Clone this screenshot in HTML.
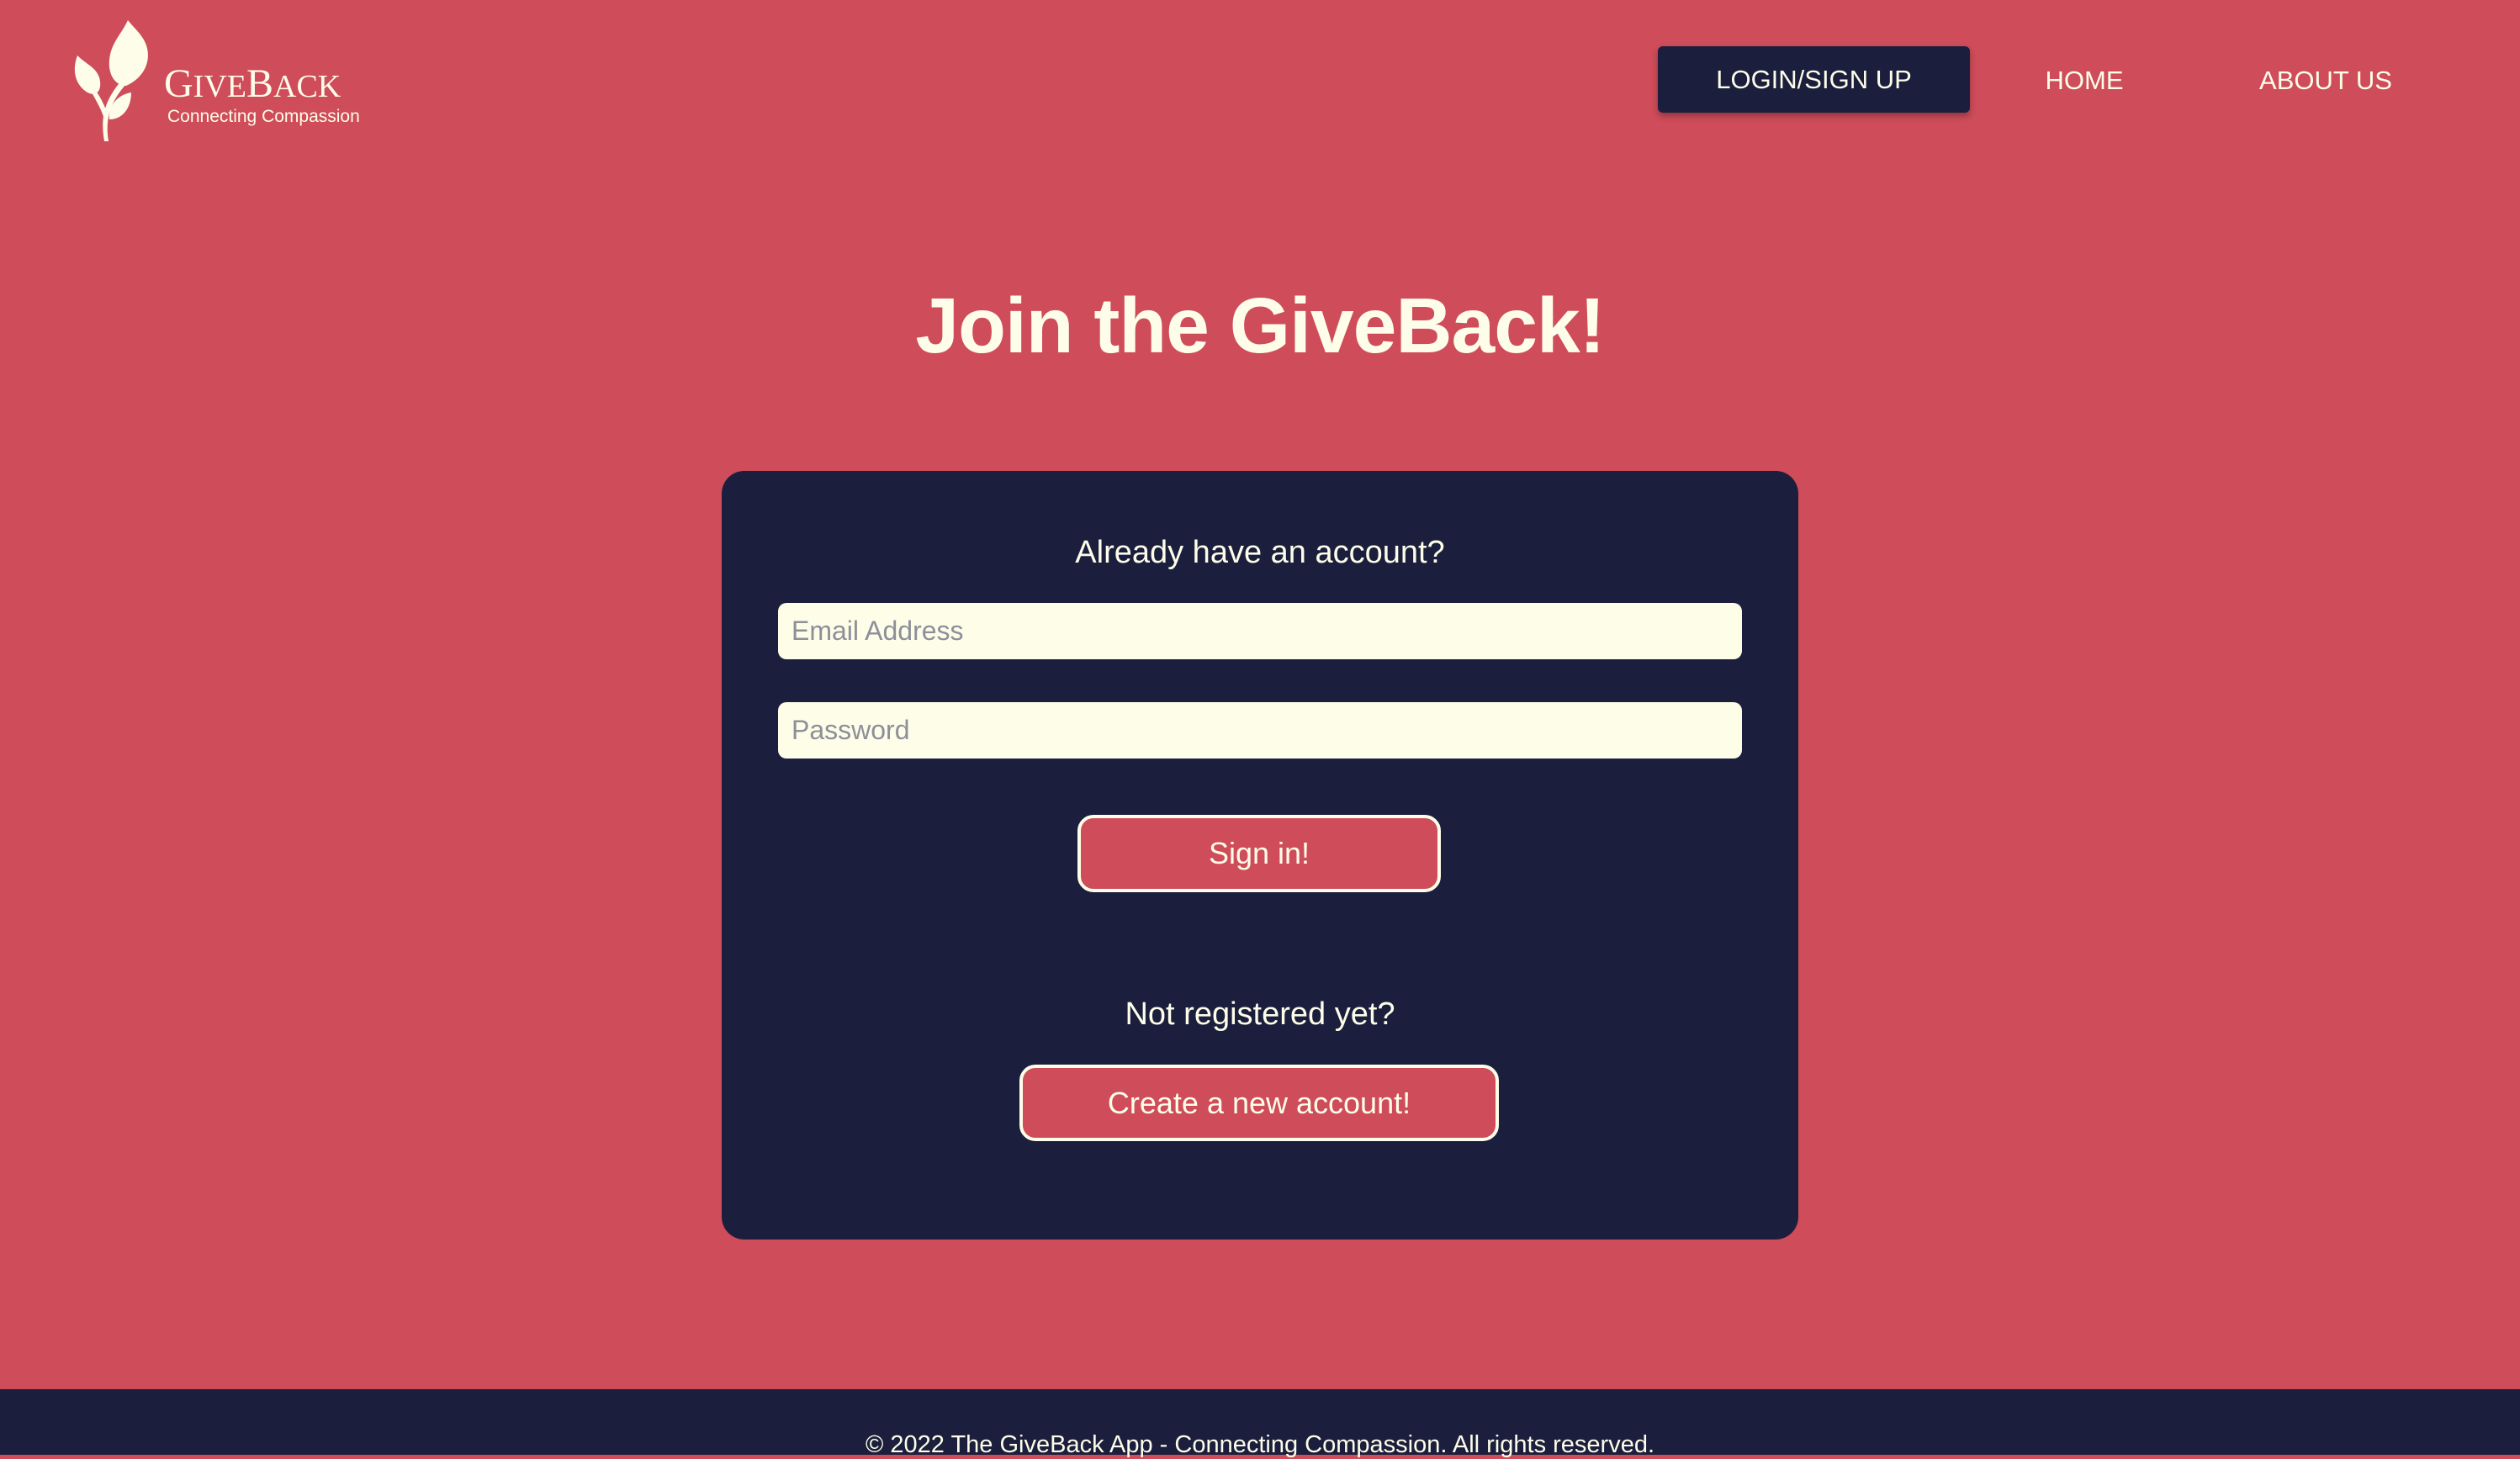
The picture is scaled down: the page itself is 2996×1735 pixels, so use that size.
<!DOCTYPE html>
<html><head><meta charset="utf-8"><style>
*{margin:0;padding:0;box-sizing:border-box}
html,body{width:2996px;height:1730px;overflow:hidden;background:#cf4c5a;font-family:"Liberation Sans",sans-serif;color:#fdfde9}
.abs{position:absolute}
.nav{font-size:31px;color:#fdfde9}
.btnnav{left:1971px;top:55px;width:371px;height:79px;background:#1b1f3d;border-radius:6px;box-shadow:0 4px 8px rgba(0,0,0,.3);display:flex;align-items:center;justify-content:center}
h1{position:absolute;left:0;width:2996px;text-align:center;top:334px;font-size:93px;font-weight:bold;letter-spacing:-1px}
.card{left:858px;top:560px;width:1280px;height:914px;background:#1b1f3d;border-radius:27px}
.t{position:absolute;left:0;width:100%;text-align:center;font-size:38px}
.inp{position:absolute;left:67px;width:1146px;height:67px;background:#fdfde8;border-radius:10px;color:#8d8f99;font-size:32px;padding-left:16px;line-height:67px}
.b{position:absolute;border:4px solid #fdfde9;background:#cf4c5a;border-radius:19px;display:flex;align-items:center;justify-content:center;font-size:36px}
.foot{left:0;top:1652px;width:2996px;height:78px;background:#1b1f3d}
</style></head><body>
<svg class="abs" style="left:86px;top:22px" width="100" height="146" viewBox="0 0 100 146">
<g fill="#fdfde9">
<path d="M66 2 C58 20 42 32 44 58 C46 74 56 80 64 80 C86 70 94 50 88 32 C84 20 74 12 66 2Z"/>
<path d="M6 44 C0 60 2 78 18 88 C30 94 36 84 32 70 C28 58 16 54 6 44Z"/>
<path d="M70 88 C56 90 42 102 44 120 C60 120 70 106 70 88Z"/>
<path d="M58 74 C42 94 32 112 38 146 L43 146 C38 116 48 96 64 78Z" />
<path d="M20 82 C28 98 34 106 38 120 L43 118 C39 104 33 92 25 82Z"/>
</g></svg>
<div class="abs" style="left:195px;top:76px;font-family:'Liberation Serif',serif;font-size:38px;letter-spacing:0;line-height:1"><span style="font-size:48px">G</span>IVE<span style="font-size:48px">B</span>ACK</div>
<div class="abs" style="left:199px;top:127px;font-size:21px">Connecting Compassion</div>
<div class="abs nav btnnav">LOGIN/SIGN UP</div>
<div class="abs nav" style="left:2378px;width:200px;text-align:center;top:78px">HOME</div>
<div class="abs nav" style="left:2615px;width:300px;text-align:center;top:78px">ABOUT US</div>
<h1>Join the GiveBack!</h1>
<div class="abs card">
<div class="t" style="top:76px">Already have an account?</div>
<div class="inp" style="top:157px">Email Address</div>
<div class="inp" style="top:275px">Password</div>
<div class="b" style="left:423px;top:409px;width:432px;height:92px">Sign in!</div>
<div class="t" style="top:625px">Not registered yet?</div>
<div class="b" style="left:354px;top:706px;width:570px;height:91px">Create a new account!</div>
</div>
<div class="abs foot"><div style="position:absolute;top:50px;width:100%;text-align:center;font-size:29px">© 2022 The GiveBack App - Connecting Compassion. All rights reserved.</div></div>
</body></html>
